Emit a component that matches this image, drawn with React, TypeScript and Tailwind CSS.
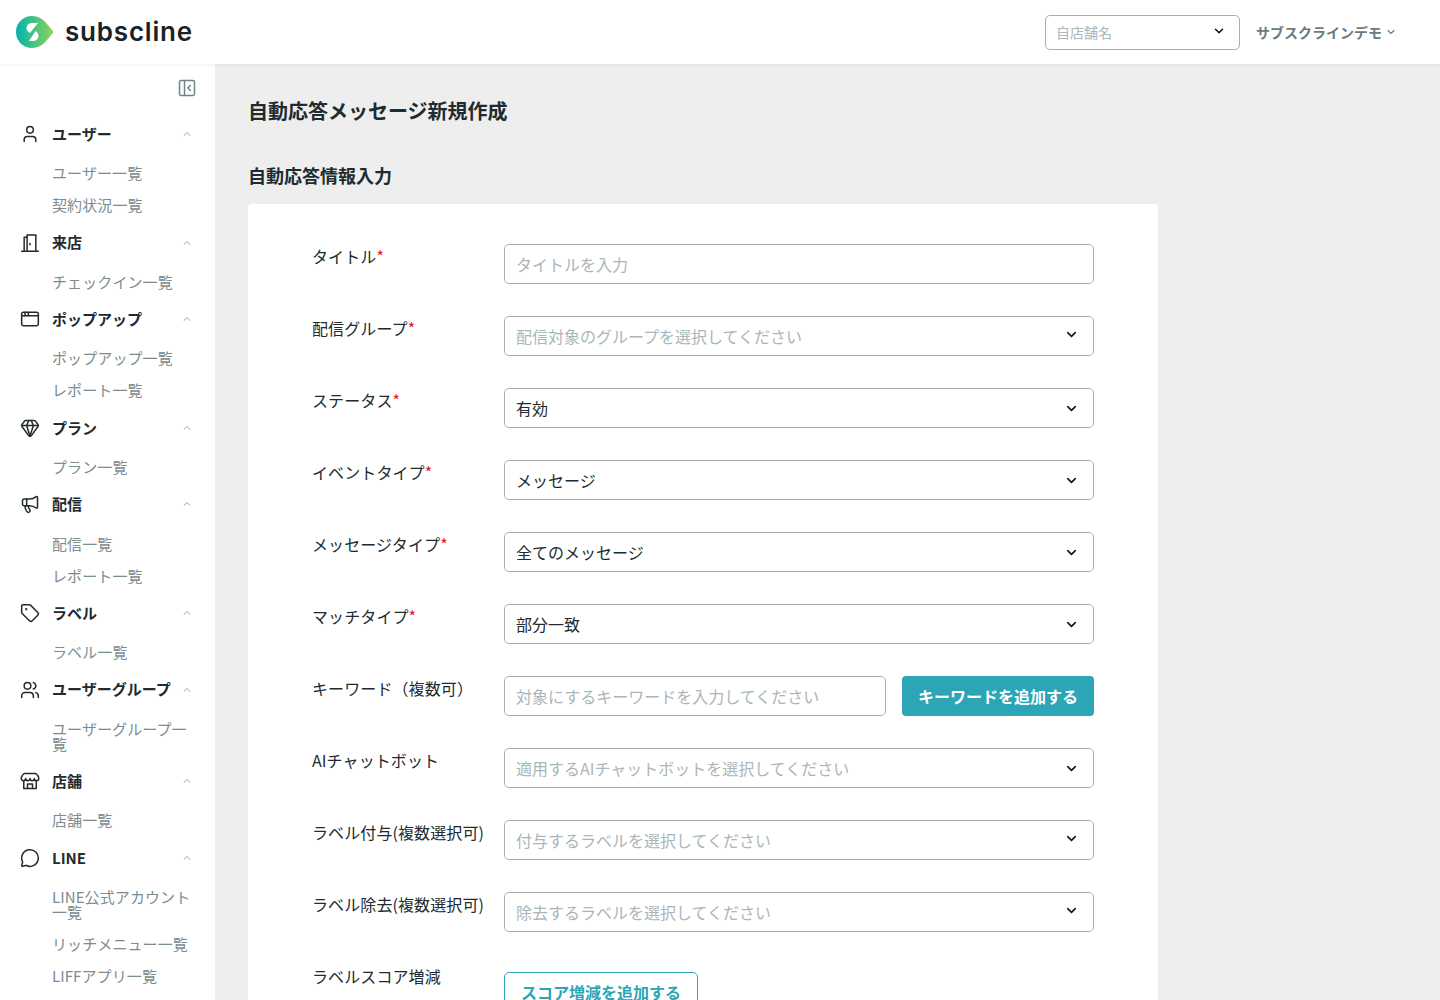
import React from "react";
import {
  AppWindow,
  ChevronDown,
  ChevronUp,
  Gem,
  Megaphone,
  MessageCircle,
  PanelLeftClose,
  Tag,
  User,
  Users,
} from "lucide-react";

const fontStack = "font-['Noto_Sans_CJK_JP','Noto_Sans',sans-serif]";

type IconProps = { size: number; strokeWidth: number };

const Door = ({ size, strokeWidth }: IconProps) => (
  <svg
    width={size}
    height={size}
    viewBox="0 0 24 24"
    fill="none"
    stroke="currentColor"
    strokeWidth={strokeWidth}
    strokeLinecap="round"
    strokeLinejoin="round"
  >
    <path d="M2 22h20" />
    <path d="M5 22V5h3.5" />
    <path d="M19 22V2.5H8.5V22" />
    <path d="M12 12.5v1.5" />
  </svg>
);

const Shop = ({ size, strokeWidth }: IconProps) => (
  <svg
    width={size}
    height={size}
    viewBox="0 0 24 24"
    fill="none"
    stroke="currentColor"
    strokeWidth={strokeWidth}
    strokeLinecap="round"
    strokeLinejoin="round"
  >
    <path d="M5 3h14c2 1.5 3.5 4 3.5 6a2.62 2.62 0 0 1-5.25 0 2.62 2.62 0 0 1-5.25 0 2.62 2.62 0 0 1-5.25 0 2.62 2.62 0 0 1-5.25 0c0-2 1.5-4.5 3.5-6z" />
    <path d="M4.5 12.5V21h15v-8.5" />
    <path d="M9 21v-5.5h6V21" />
  </svg>
);

const Logo = () => (
  <svg width="38" height="32" viewBox="0 0 38 32">
    <defs>
      <linearGradient id="logoGrad" x1="0" y1="0.5" x2="1" y2="0.5">
        <stop offset="0" stopColor="#00b4ae" />
        <stop offset="1" stopColor="#93d355" />
      </linearGradient>
    </defs>
    <path
      d="M16 0C23 0 28 4 31 8L37 15Q38 16 37 17L31 24C28 28 23 32 16 32 7 32 0 25 0 16S7 0 16 0Z"
      fill="url(#logoGrad)"
    />
    <path d="M22 7L16 7C12.5 7 10.5 9.5 10.5 12 10.5 14.5 12 16 14 17Z" fill="#fff" />
    <path d="M13 25L17 25C20.5 25 22.5 22.5 22.5 20 22.5 17.5 21 16 19.5 15Z" fill="#fff" />
  </svg>
);

const menu = [
  { icon: User, label: "ユーザー", items: ["ユーザー一覧", "契約状況一覧"] },
  { icon: Door, label: "来店", items: ["チェックイン一覧"] },
  { icon: AppWindow, label: "ポップアップ", items: ["ポップアップ一覧", "レポート一覧"] },
  { icon: Gem, label: "プラン", items: ["プラン一覧"] },
  { icon: Megaphone, label: "配信", items: ["配信一覧", "レポート一覧"] },
  { icon: Tag, label: "ラベル", items: ["ラベル一覧"] },
  { icon: Users, label: "ユーザーグループ", items: ["ユーザーグループ一覧"] },
  { icon: Shop, label: "店舗", items: ["店舗一覧"] },
  {
    icon: MessageCircle,
    label: "LINE",
    items: ["LINE公式アカウント一覧", "リッチメニュー一覧", "LIFFアプリ一覧"],
  },
];

const Sidebar = () => (
  <aside className="w-[215px] shrink-0 bg-white pt-[14px] overflow-hidden">
    <div className="flex justify-end pr-[18px] text-[#6f8288]">
      <PanelLeftClose size={20} strokeWidth={1.8} />
    </div>
    <nav className="mt-[20px] flex flex-col gap-[6.3px]">
      {menu.map((group) => {
        const Icon = group.icon;
        return (
          <div key={group.label} className="flex flex-col gap-[6.3px]">
            <div className="flex h-8 items-center pl-5 pr-[22px] text-[#212b2f]">
              <span className="w-8 shrink-0">
                <Icon size={20} strokeWidth={1.8} />
              </span>
              <span className="flex-1 text-[15px] font-bold whitespace-nowrap">
                {group.label}
              </span>
              <ChevronUp size={12} strokeWidth={1.8} className="text-[#8a9a9e]" />
            </div>
            <ul className="flex flex-col">
              {group.items.map((item) => (
                <li
                  key={item}
                  className="pt-[9px] pb-[8px] pl-[52px] pr-[16px] text-[15px] leading-[15px] tracking-[0.1px] text-[#7d8c90]"
                >
                  {item}
                </li>
              ))}
            </ul>
          </div>
        );
      })}
    </nav>
  </aside>
);

const Label = ({ text, required }: { text: string; required?: boolean }) => (
  <label className="w-[192px] shrink-0 text-[16px] leading-6 tracking-[0.1px] text-[#212b2f]">
    {text}
    {required && <span className="text-[#e8112d]">*</span>}
  </label>
);

const Select = ({
  value,
  placeholder,
  multi,
}: {
  value?: string;
  placeholder?: string;
  multi?: boolean;
}) => (
  <div className="flex h-10 flex-1 items-center justify-between rounded-[5px] border border-[#a3b1b5] bg-white pl-[11px] pr-[14px]">
    <span className={`text-[16px] ${value ? "text-[#212b2f]" : "text-[#a9b6ba]"}`}>
      {value ?? placeholder}
    </span>
    <ChevronDown
      size={15}
      strokeWidth={2.5}
      className={`text-[#111] ${multi ? "-translate-y-0.5" : ""}`}
    />
  </div>
);

const inputClass =
  "h-10 rounded-[5px] border border-[#a3b1b5] bg-white pl-[11px] pr-3 text-[16px] placeholder:text-[#a9b6ba] outline-none";

const rows: {
  label: string;
  required?: boolean;
  value?: string;
  placeholder?: string;
  multi?: boolean;
}[] = [
  {
    label: "配信グループ",
    required: true,
    placeholder: "配信対象のグループを選択してください",
    multi: true,
  },
  { label: "ステータス", required: true, value: "有効" },
  { label: "イベントタイプ", required: true, value: "メッセージ" },
  { label: "メッセージタイプ", required: true, value: "全てのメッセージ" },
  { label: "マッチタイプ", required: true, value: "部分一致" },
];

const rowsAfter = [
  { label: "AIチャットボット", placeholder: "適用するAIチャットボットを選択してください" },
  { label: "ラベル付与(複数選択可)", placeholder: "付与するラベルを選択してください", multi: true },
  { label: "ラベル除去(複数選択可)", placeholder: "除去するラベルを選択してください", multi: true },
];

export default function App() {
  return (
    <div className={`flex h-screen flex-col overflow-hidden bg-[#eeeeee] ${fontStack}`}>
      <header className="relative z-10 flex h-16 shrink-0 items-center bg-white pl-4 pr-[43px] shadow-[0_1px_3px_rgba(0,0,0,0.06)]">
        <Logo />
        <span className="ml-[11px] font-['Inter',sans-serif] text-[26px] leading-8 font-semibold tracking-[0.8px] text-[#1a2326]">
          subscline
        </span>
        <div className="ml-auto flex h-[35px] w-[195px] items-center justify-between rounded-[5px] border border-[#a3b1b5] pl-[10px] pr-[13px]">
          <span className="text-[14px] text-[#a9b6ba]">自店舗名</span>
          <ChevronDown size={14} strokeWidth={2.6} className="-translate-y-px text-[#111]" />
        </div>
        <div className="ml-4 flex items-center gap-[3px] text-[#6b7b80]">
          <span className="text-[14px] font-bold">サブスクラインデモ</span>
          <ChevronDown size={12} strokeWidth={2.2} />
        </div>
      </header>
      <div className="flex min-h-0 flex-1">
        <Sidebar />
        <main className="flex-1 pl-[33px] pt-8">
          <h1 className="text-[20px] leading-[30px] font-bold text-[#212b2f]">
            自動応答メッセージ新規作成
          </h1>
          <h2 className="mt-[36px] text-[18px] leading-[26px] font-bold text-[#212b2f]">
            自動応答情報入力
          </h2>
          <section className="mt-[16px] flex w-[910px] flex-col gap-8 rounded bg-white px-16 pt-10 pb-10">
            <div className="flex">
              <Label text="タイトル" required />
              <input className={`${inputClass} flex-1`} placeholder="タイトルを入力" />
            </div>
            {rows.map((row) => (
              <div key={row.label} className="flex">
                <Label text={row.label} required={row.required} />
                <Select value={row.value} placeholder={row.placeholder} multi={row.multi} />
              </div>
            ))}
            <div className="flex">
              <Label text="キーワード（複数可）" />
              <input
                className={`${inputClass} w-[382px]`}
                placeholder="対象にするキーワードを入力してください"
              />
              <button className="ml-4 h-10 w-[192px] rounded bg-[#2ca5b6] text-[16px] font-bold text-white">
                キーワードを追加する
              </button>
            </div>
            {rowsAfter.map((row) => (
              <div key={row.label} className="flex">
                <Label text={row.label} />
                <Select placeholder={row.placeholder} multi={row.multi} />
              </div>
            ))}
            <div className="flex">
              <Label text="ラベルスコア増減" />
              <button className="mt-2 h-10 w-[194px] rounded-[5px] border border-[#2ca5b6] text-[16px] font-bold text-[#2ca5b6]">
                スコア増減を追加する
              </button>
            </div>
          </section>
        </main>
      </div>
    </div>
  );
}
